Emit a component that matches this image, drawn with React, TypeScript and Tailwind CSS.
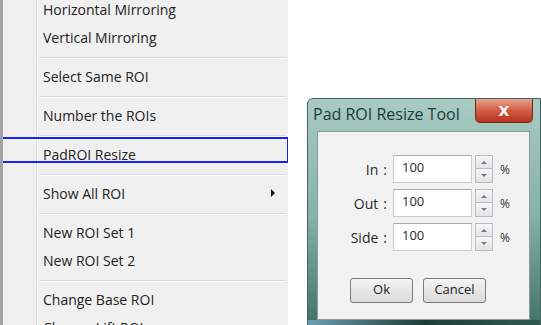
import React from "react";

const font = { fontFamily: '"Open Sans", "Noto Sans", Arial, sans-serif' };

type Entry = { label?: string; sep?: boolean; sub?: boolean };

const entries: Entry[] = [
  { label: "Horizontal Mirroring" },
  { label: "Vertical Mirroring" },
  { sep: true },
  { label: "Select Same ROI" },
  { sep: true },
  { label: "Number the ROIs" },
  { sep: true },
  { label: "PadROI Resize" },
  { sep: true },
  { label: "Show All ROI", sub: true },
  { sep: true },
  { label: "New ROI Set 1" },
  { label: "New ROI Set 2" },
  { sep: true },
  { label: "Change Base ROI" },
  { label: "Change Lift ROI" },
];

function ContextMenu() {
  return (
    <div className="relative w-[288px] h-[325px] shrink-0 overflow-hidden bg-[#f0f0f0] border-l-[3px] border-[#a3a3a3] flex">
      <div className="w-[34px] shrink-0 border-r border-[#dcdcdc]" />
      <div className="flex-1 flex flex-col border-l border-white -mt-[4px]">
        {entries.map((e, i) =>
          e.sep ? (
            <div key={i} className="h-[11px] shrink-0 flex flex-col justify-center pl-[1px] pr-[2px]">
              <div className="h-px bg-[#dcdcdc]" />
              <div className="h-px bg-white" />
            </div>
          ) : (
            <div
              key={i}
              className="h-[28px] shrink-0 flex items-center justify-between pl-[5px] pr-[13px] pb-[2px] text-[14px] text-[#222]"
            >
              <span>{e.label}</span>
              {e.sub && (
                <span className="w-0 h-0 border-y-[4px] border-y-transparent border-l-[4px] border-l-[#111]" />
              )}
            </div>
          )
        )}
      </div>
      {/* annotation box */}
      <div className="absolute left-[-3px] top-[137px] w-[289px] h-[26px] border-2 border-[#1a22f0]" />
    </div>
  );
}

function Spinner() {
  return (
    <div className="w-[18px] h-[28px] flex flex-col">
      <div className="h-[14px] border border-[#b5bcc2] bg-gradient-to-b from-[#f7f7f7] to-[#e4e4e4] flex items-center justify-center">
        <span className="w-0 h-0 border-x-[3px] border-x-transparent border-b-[3px] border-b-[#6d7d8b]" />
      </div>
      <div className="h-[14px] border border-t-0 border-[#b5bcc2] bg-gradient-to-b from-[#f7f7f7] to-[#e4e4e4] flex items-center justify-center">
        <span className="w-0 h-0 border-x-[3px] border-x-transparent border-t-[3px] border-t-[#6d7d8b]" />
      </div>
    </div>
  );
}

function Field({ label }: { label: string }) {
  return (
    <div className="flex items-center h-[28px]">
      <span className="w-[70px] flex justify-end gap-[5px] pr-[1px] text-[14px] text-[#2a2a2a]">
        <span>{label}</span>
        <span>:</span>
      </span>
      <div className="ml-[5px] w-[79px] h-[28px] bg-white border border-[#c9cdd1] border-t-[#a9adb2] flex items-center pl-[8px] pb-[3px] text-[13px] text-[#2a2a2a]">
        100
      </div>
      <div className="ml-[3px]">
        <Spinner />
      </div>
      <span className="ml-[7px] text-[12px] text-[#333] pt-[1px]">%</span>
    </div>
  );
}

function ResizeDialog() {
  return (
    <div className="ml-[19px] mt-[98px] w-[234px] h-[235px] shrink-0 rounded-tl-[6px] border border-[#42665f] bg-gradient-to-b from-[#a8cbc2] via-[#86b2a7] to-[#3f6f64] flex flex-col">
      <div className="h-[32px] shrink-0 flex items-start justify-between pl-[5px] pr-[7px]">
        <span className="mt-[3px] text-[16px] text-[#1d3b38]" style={font}>
          Pad ROI Resize Tool
        </span>
        <div className="w-[58px] h-[24px] rounded-b-[5px] border border-t-0 border-[#6c2b20] bg-gradient-to-b from-[#e9a491] via-[#d05a43] to-[#b8321f] flex items-center justify-center">
          <span className="text-white font-bold text-[14px] leading-none" style={{ fontFamily: '"DejaVu Sans", sans-serif' }}>
            X
          </span>
        </div>
      </div>
      <div className="ml-[9px] mr-[10px] flex-1 bg-[#f2f2f2] border border-[#8c9c9a] flex flex-col pt-[23px]">
        <div className="flex flex-col gap-[6px]">
          <Field label="In" />
          <Field label="Out" />
          <Field label="Side" />
        </div>
        <div className="flex gap-[10px] mt-[27px] pl-[32px]">
          <div className="w-[63px] h-[25px] rounded-[3px] border border-[#7a7a7a] bg-gradient-to-b from-[#f4f4f4] to-[#dadada] flex items-center justify-center text-[13px] text-[#222] pb-[2px]">
            Ok
          </div>
          <div className="w-[63px] h-[25px] rounded-[3px] border border-[#7a7a7a] bg-gradient-to-b from-[#f4f4f4] to-[#dadada] flex items-center justify-center text-[13px] text-[#222] pb-[2px]">
            Cancel
          </div>
        </div>
      </div>
      <div className="h-[12px] shrink-0 bg-gradient-to-r from-[#6f9fb5] via-[#1f3d38] to-[#2f5a50]" />
    </div>
  );
}

export default function App() {
  return (
    <div className="w-[541px] h-[325px] overflow-hidden bg-white flex items-start" style={font}>
      <ContextMenu />
      <ResizeDialog />
    </div>
  );
}
